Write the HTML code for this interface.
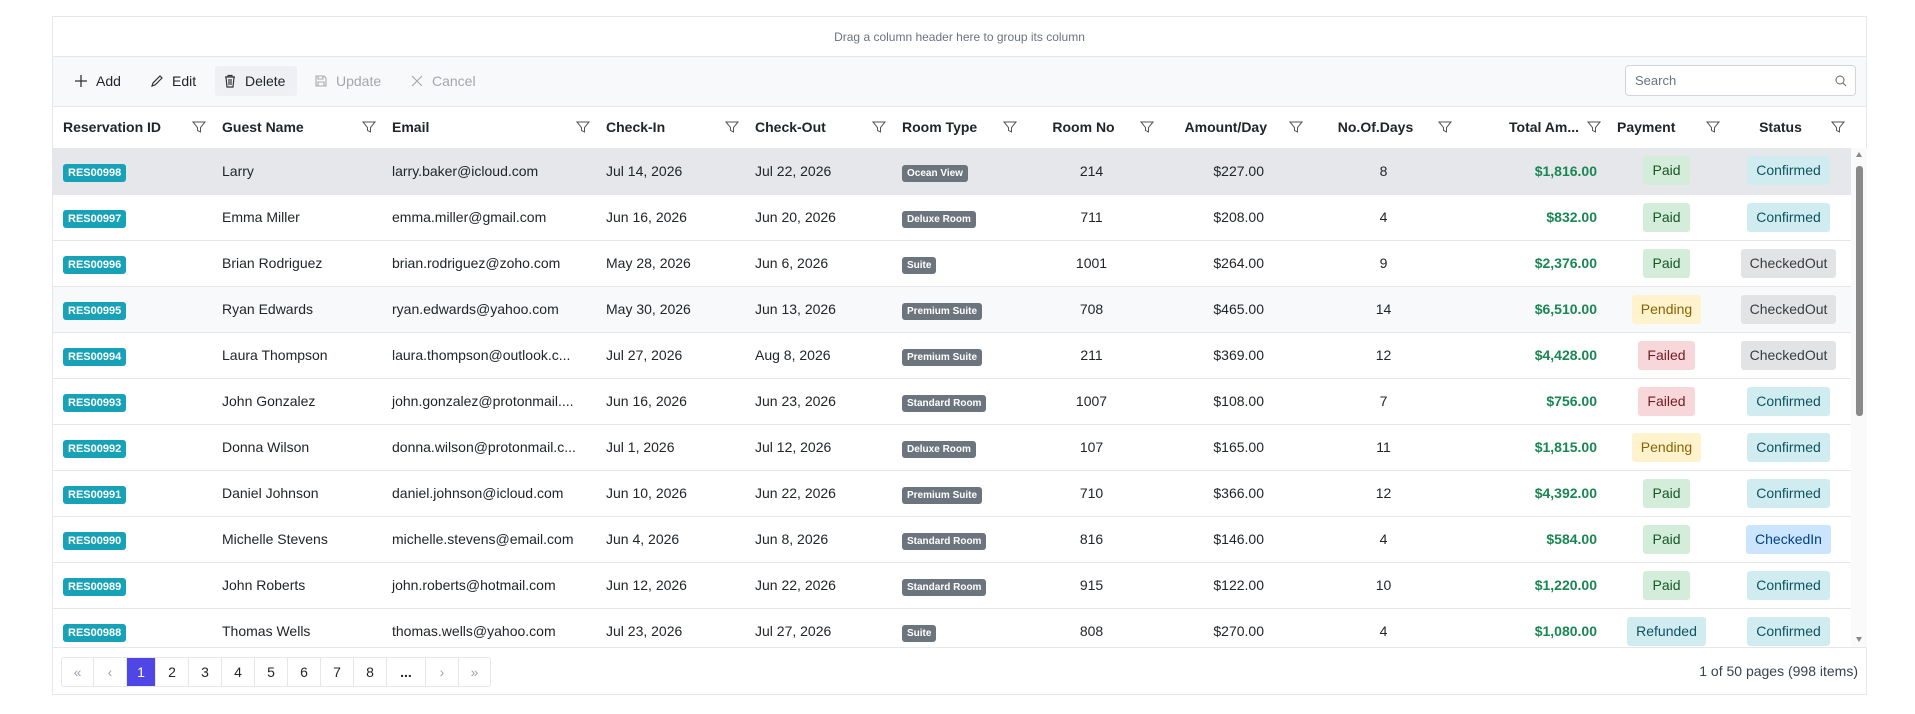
<!DOCTYPE html>
<html><head><meta charset="utf-8"><style>
*{box-sizing:border-box;margin:0;padding:0}
body{width:1915px;height:714px;background:#fff;font-family:"Liberation Sans",sans-serif;color:#212529;font-size:14px;position:relative;overflow:hidden}
.grid{position:absolute;left:52px;top:16px;width:1815px;height:679px;border:1px solid #e5e7eb}
.group{height:40px;border-bottom:1px solid #e5e7eb;text-align:center;font-size:12px;color:#6b7280;line-height:40px}
.tb{height:50px;background:#f8f9fb;border-bottom:1px solid #e5e7eb;position:relative}
.btn{position:absolute;top:9px;height:30px;line-height:30px;font-size:14px;color:#212529;display:flex;align-items:center;gap:8px;padding:0 6px;white-space:nowrap}
.btn.dis{color:#a3a6ab}
.search{position:absolute;left:1572px;top:8px;width:231px;height:31px;border:1px solid #d1d5db;border-radius:4px;background:#fff;font-size:13px;color:#6b7280;padding-left:9px;line-height:29px}
table{border-collapse:collapse;table-layout:fixed;position:absolute;left:0}
th{height:41px;font-weight:bold;font-size:14px;text-align:left;padding:0 10px;position:relative;border-bottom:1px solid #e5e7eb;white-space:nowrap}
th .f{position:absolute;right:6px;top:13px}
td{height:46px;padding:0 10px;border-bottom:1px solid #e5e7eb;white-space:nowrap;overflow:hidden;text-overflow:ellipsis}
.c{text-align:center}.r{text-align:right}
.id{background:#17a2b8;color:#fff;font-weight:bold;font-size:11px;padding:3px 5px;border-radius:3px}
.rt{background:#6c757d;color:#fff;font-weight:bold;font-size:10px;padding:3px 5px;border-radius:3px}
.tot{color:#198754;font-weight:bold}
.p{display:inline-block;padding:0 9px;height:29px;line-height:29px;border-radius:3px;font-size:14px}
.paid{background:#d4edda;color:#155724}.pend{background:#fff3cd;color:#856404}.fail{background:#f8d7da;color:#721c24}.ref{background:#d1ecf1;color:#0c5460}
.conf{background:#d1ecf1;color:#0c5460}.out{background:#e2e3e5;color:#383d41}.in{background:#cce5ff;color:#004085}
tr.sel td{background:#e5e7eb}tr.hv td{background:#f8f9fa}
.body{position:absolute;top:131px;left:0;width:1798px;height:500px;overflow:hidden}
.sb{position:absolute;left:1798px;top:131px;width:16px;height:500px;background:#fafafa}
.pager{position:absolute;top:630px;left:0;width:1813px;height:48px;border-top:1px solid #e5e7eb}
.pg{position:absolute;left:8px;top:9px;display:flex;border:1px solid #e5e7eb;border-radius:3px;height:30px}
.pg div{height:28px;line-height:28px;text-align:center;border-right:1px solid #e5e7eb;font-size:14px;color:#212529}
.pg div:last-child{border-right:none}
.pg .g{color:#9ca3af}
.pg .a{background:#4f46e5;color:#fff}
.info{position:absolute;right:8px;top:15px;font-size:14px;color:#374151}
</style></head><body>
<div class="grid">
<div class="group">Drag a column header here to group its column</div>
<div class="tb">
<div class="btn" style="left:15px"><svg width="14" height="14" viewBox="0 0 14 14"><path d="M7 1v12M1 7h12" stroke="#333" stroke-width="1.3"/></svg>Add</div>
<div class="btn" style="left:91px"><svg width="14" height="14" viewBox="0 0 14 14"><path d="M2 12l1-3 7-7 2 2-7 7z" stroke="#333" fill="none" stroke-width="1.2"/></svg>Edit</div>
<div class="btn" style="left:162px;width:82px;background:#eef0f3;border-radius:3px;padding-left:8px"><svg width="14" height="14" viewBox="0 0 14 14"><path d="M2 3h10M5 3V1.5h4V3M3 3l1 10h6l1-10M6 5v6M8 5v6" stroke="#333" fill="none" stroke-width="1.2"/></svg>Delete</div>
<div class="btn dis" style="left:255px"><svg width="14" height="14" viewBox="0 0 14 14"><path d="M2 2h8l2 2v8H2zM4 2v3h5V2M4 12V8h6v4" stroke="#aaa" fill="none" stroke-width="1.1"/></svg>Update</div>
<div class="btn dis" style="left:351px"><svg width="14" height="14" viewBox="0 0 14 14"><path d="M2 2l10 10M12 2L2 12" stroke="#aaa" stroke-width="1.2"/></svg>Cancel</div>
<div class="search">Search<svg style="position:absolute;right:8px;top:9px" width="12" height="12" viewBox="0 0 12 12"><circle cx="5" cy="5" r="4" stroke="#666" fill="none"/><path d="M8 8l3 3" stroke="#666"/></svg></div>
</div>
<table style="top:90px;width:1798px">
<colgroup><col style="width:159px"><col style="width:170px"><col style="width:214px"><col style="width:149px"><col style="width:147px"><col style="width:131px"><col style="width:137px"><col style="width:149px"><col style="width:149px"><col style="width:149px"><col style="width:119px"><col style="width:125px"></colgroup>
<tr>
<th>Reservation ID<svg class="f" width="14" height="14" viewBox="0 0 14 14"><path d="M1 2h12L8.5 7.5V12L5.5 10.5V7.5z" fill="none" stroke="#555"/></svg></th>
<th>Guest Name<svg class="f" width="14" height="14" viewBox="0 0 14 14"><path d="M1 2h12L8.5 7.5V12L5.5 10.5V7.5z" fill="none" stroke="#555"/></svg></th>
<th>Email<svg class="f" width="14" height="14" viewBox="0 0 14 14"><path d="M1 2h12L8.5 7.5V12L5.5 10.5V7.5z" fill="none" stroke="#555"/></svg></th>
<th>Check-In<svg class="f" width="14" height="14" viewBox="0 0 14 14"><path d="M1 2h12L8.5 7.5V12L5.5 10.5V7.5z" fill="none" stroke="#555"/></svg></th>
<th>Check-Out<svg class="f" width="14" height="14" viewBox="0 0 14 14"><path d="M1 2h12L8.5 7.5V12L5.5 10.5V7.5z" fill="none" stroke="#555"/></svg></th>
<th>Room Type<svg class="f" width="14" height="14" viewBox="0 0 14 14"><path d="M1 2h12L8.5 7.5V12L5.5 10.5V7.5z" fill="none" stroke="#555"/></svg></th>
<th class="c" style="padding-right:26px">Room No<svg class="f" width="14" height="14" viewBox="0 0 14 14"><path d="M1 2h12L8.5 7.5V12L5.5 10.5V7.5z" fill="none" stroke="#555"/></svg></th>
<th class="r" style="padding-right:42px">Amount/Day<svg class="f" width="14" height="14" viewBox="0 0 14 14"><path d="M1 2h12L8.5 7.5V12L5.5 10.5V7.5z" fill="none" stroke="#555"/></svg></th>
<th class="c" style="padding-right:26px">No.Of.Days<svg class="f" width="14" height="14" viewBox="0 0 14 14"><path d="M1 2h12L8.5 7.5V12L5.5 10.5V7.5z" fill="none" stroke="#555"/></svg></th>
<th class="r" style="padding-right:28px">Total Am...<svg class="f" width="14" height="14" viewBox="0 0 14 14"><path d="M1 2h12L8.5 7.5V12L5.5 10.5V7.5z" fill="none" stroke="#555"/></svg></th>
<th>Payment<svg class="f" width="14" height="14" viewBox="0 0 14 14"><path d="M1 2h12L8.5 7.5V12L5.5 10.5V7.5z" fill="none" stroke="#555"/></svg></th>
<th class="c" style="padding-right:26px">Status<svg class="f" width="14" height="14" viewBox="0 0 14 14"><path d="M1 2h12L8.5 7.5V12L5.5 10.5V7.5z" fill="none" stroke="#555"/></svg></th>
</tr></table>
<div class="body"><table style="top:0;width:1798px">
<colgroup><col style="width:159px"><col style="width:170px"><col style="width:214px"><col style="width:149px"><col style="width:147px"><col style="width:131px"><col style="width:137px"><col style="width:149px"><col style="width:149px"><col style="width:149px"><col style="width:119px"><col style="width:125px"></colgroup>
<tr class="sel"><td><span class="id">RES00998</span></td><td>Larry</td><td>larry.baker@icloud.com</td><td>Jul 14, 2026</td><td>Jul 22, 2026</td><td><span class="rt">Ocean View</span></td><td class="c">214</td><td class="r" style="padding-right:45px">$227.00</td><td class="c">8</td><td class="r tot">$1,816.00</td><td class="c"><span class="p paid">Paid</span></td><td class="c"><span class="p conf">Confirmed</span></td></tr>
<tr><td><span class="id">RES00997</span></td><td>Emma Miller</td><td>emma.miller@gmail.com</td><td>Jun 16, 2026</td><td>Jun 20, 2026</td><td><span class="rt">Deluxe Room</span></td><td class="c">711</td><td class="r" style="padding-right:45px">$208.00</td><td class="c">4</td><td class="r tot">$832.00</td><td class="c"><span class="p paid">Paid</span></td><td class="c"><span class="p conf">Confirmed</span></td></tr>
<tr><td><span class="id">RES00996</span></td><td>Brian Rodriguez</td><td>brian.rodriguez@zoho.com</td><td>May 28, 2026</td><td>Jun 6, 2026</td><td><span class="rt">Suite</span></td><td class="c">1001</td><td class="r" style="padding-right:45px">$264.00</td><td class="c">9</td><td class="r tot">$2,376.00</td><td class="c"><span class="p paid">Paid</span></td><td class="c"><span class="p out">CheckedOut</span></td></tr>
<tr class="hv"><td><span class="id">RES00995</span></td><td>Ryan Edwards</td><td>ryan.edwards@yahoo.com</td><td>May 30, 2026</td><td>Jun 13, 2026</td><td><span class="rt">Premium Suite</span></td><td class="c">708</td><td class="r" style="padding-right:45px">$465.00</td><td class="c">14</td><td class="r tot">$6,510.00</td><td class="c"><span class="p pend">Pending</span></td><td class="c"><span class="p out">CheckedOut</span></td></tr>
<tr><td><span class="id">RES00994</span></td><td>Laura Thompson</td><td>laura.thompson@outlook.c...</td><td>Jul 27, 2026</td><td>Aug 8, 2026</td><td><span class="rt">Premium Suite</span></td><td class="c">211</td><td class="r" style="padding-right:45px">$369.00</td><td class="c">12</td><td class="r tot">$4,428.00</td><td class="c"><span class="p fail">Failed</span></td><td class="c"><span class="p out">CheckedOut</span></td></tr>
<tr><td><span class="id">RES00993</span></td><td>John Gonzalez</td><td>john.gonzalez@protonmail....</td><td>Jun 16, 2026</td><td>Jun 23, 2026</td><td><span class="rt">Standard Room</span></td><td class="c">1007</td><td class="r" style="padding-right:45px">$108.00</td><td class="c">7</td><td class="r tot">$756.00</td><td class="c"><span class="p fail">Failed</span></td><td class="c"><span class="p conf">Confirmed</span></td></tr>
<tr><td><span class="id">RES00992</span></td><td>Donna Wilson</td><td>donna.wilson@protonmail.c...</td><td>Jul 1, 2026</td><td>Jul 12, 2026</td><td><span class="rt">Deluxe Room</span></td><td class="c">107</td><td class="r" style="padding-right:45px">$165.00</td><td class="c">11</td><td class="r tot">$1,815.00</td><td class="c"><span class="p pend">Pending</span></td><td class="c"><span class="p conf">Confirmed</span></td></tr>
<tr><td><span class="id">RES00991</span></td><td>Daniel Johnson</td><td>daniel.johnson@icloud.com</td><td>Jun 10, 2026</td><td>Jun 22, 2026</td><td><span class="rt">Premium Suite</span></td><td class="c">710</td><td class="r" style="padding-right:45px">$366.00</td><td class="c">12</td><td class="r tot">$4,392.00</td><td class="c"><span class="p paid">Paid</span></td><td class="c"><span class="p conf">Confirmed</span></td></tr>
<tr><td><span class="id">RES00990</span></td><td>Michelle Stevens</td><td>michelle.stevens@email.com</td><td>Jun 4, 2026</td><td>Jun 8, 2026</td><td><span class="rt">Standard Room</span></td><td class="c">816</td><td class="r" style="padding-right:45px">$146.00</td><td class="c">4</td><td class="r tot">$584.00</td><td class="c"><span class="p paid">Paid</span></td><td class="c"><span class="p in">CheckedIn</span></td></tr>
<tr><td><span class="id">RES00989</span></td><td>John Roberts</td><td>john.roberts@hotmail.com</td><td>Jun 12, 2026</td><td>Jun 22, 2026</td><td><span class="rt">Standard Room</span></td><td class="c">915</td><td class="r" style="padding-right:45px">$122.00</td><td class="c">10</td><td class="r tot">$1,220.00</td><td class="c"><span class="p paid">Paid</span></td><td class="c"><span class="p conf">Confirmed</span></td></tr>
<tr><td><span class="id">RES00988</span></td><td>Thomas Wells</td><td>thomas.wells@yahoo.com</td><td>Jul 23, 2026</td><td>Jul 27, 2026</td><td><span class="rt">Suite</span></td><td class="c">808</td><td class="r" style="padding-right:45px">$270.00</td><td class="c">4</td><td class="r tot">$1,080.00</td><td class="c"><span class="p ref">Refunded</span></td><td class="c"><span class="p conf">Confirmed</span></td></tr>
</table></div>
<div class="sb"><svg width="16" height="500" viewBox="0 0 16 500"><path d="M5 9l3-5 3 5z" fill="#888"/><rect x="5" y="18" width="7" height="250" rx="3" fill="#8a8a8a"/><path d="M5 489l3 5 3-5z" fill="#888"/></svg></div>
<div class="pager">
<div class="pg"><div class="g" style="width:32px">«</div><div class="g" style="width:33px">‹</div><div class="a" style="width:29px">1</div><div style="width:33px">2</div><div style="width:33px">3</div><div style="width:33px">4</div><div style="width:33px">5</div><div style="width:33px">6</div><div style="width:33px">7</div><div style="width:33px">8</div><div style="width:39px;font-weight:bold">...</div><div class="g" style="width:33px">›</div><div class="g" style="width:31px">»</div></div>
<div class="info">1 of 50 pages (998 items)</div>
</div>
</div>
</body></html>
